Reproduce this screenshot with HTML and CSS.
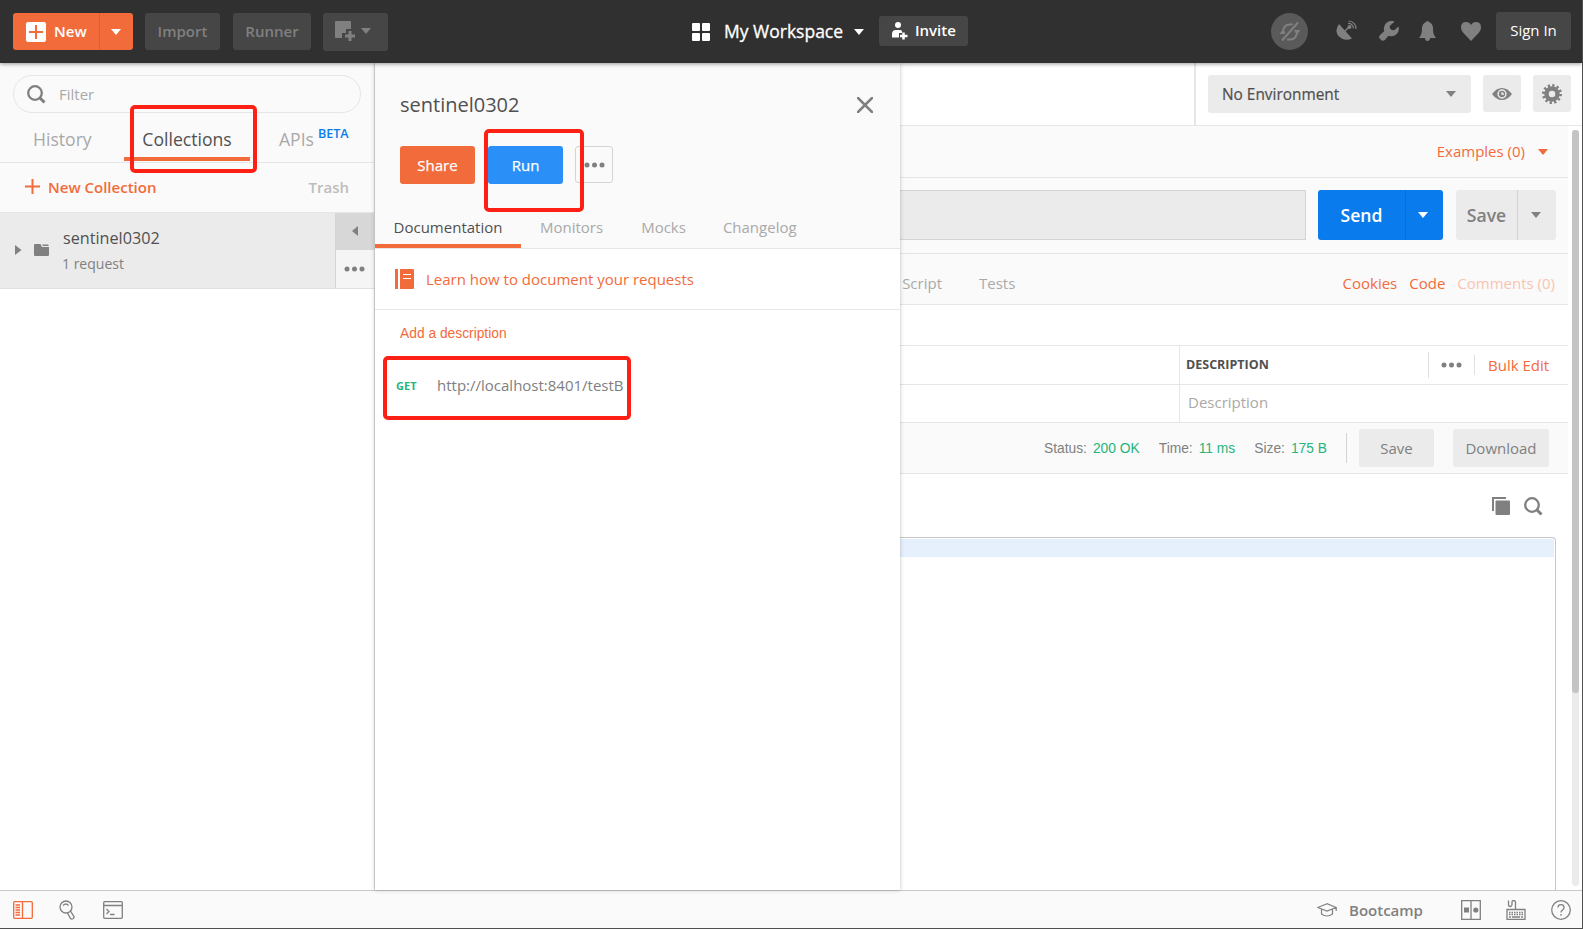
FILE: index.html
```html
<!DOCTYPE html>
<html lang="en">
<head>
  <meta charset="utf-8">
  <title>Postman</title>
  <link rel="stylesheet" href="styles.css">
</head>
<body>
  <div class="app">
    <header class="header">
      <div class="header-left">
        <div class="btn-new">
          <div class="new-main">
            <svg width="20" height="20" viewBox="0 0 20 20"><rect width="20" height="20" rx="2" fill="#fff"/><path d="M10 3v14M3 10h14" stroke="#f26b3a" stroke-width="2"/></svg>
            <span>New</span>
          </div>
          <div class="new-drop"><i class="caret white"></i></div>
        </div>
        <div class="btn-dark import">Import</div>
        <div class="btn-dark runner">Runner</div>
        <div class="btn-dark window">
          <svg width="20" height="20" viewBox="0 0 20 20"><path d="M0 1q0-1 1-1h14q1 0 1 1v7h-5v4H7v5H1q-1 0-1-1z" fill="#808080"/><path d="M15 10v10M10 15h10" stroke="#808080" stroke-width="3"/></svg>
          <i class="caret grey"></i>
        </div>
      </div>
      <div class="header-center">
        <svg width="18" height="18" viewBox="0 0 18 18" fill="#fff"><rect width="8" height="8" rx="1"/><rect x="10" width="8" height="8" rx="1"/><rect y="10" width="8" height="8" rx="1"/><rect x="10" y="10" width="8" height="8" rx="1"/></svg>
        <span class="workspace">My Workspace</span>
        <i class="caret white"></i>
        <div class="invite">
          <svg width="16" height="18" viewBox="0 0 16 18"><circle cx="6" cy="3" r="3" fill="#fff"/><path d="M0 15.500V12q0-4 4-4h4q1.500 0 2 1v2H7v4.500z" fill="#fff"/><path d="M11.500 10.500v7M8 14h7.500" stroke="#fff" stroke-width="2.500"/></svg>
          <span>Invite</span>
        </div>
      </div>
      <div class="header-right">
        <div class="sync">
          <svg width="22" height="22" viewBox="0 0 22 22" fill="none" stroke="#808080" stroke-width="2"><path d="M4 12q0-8.500 7-8.500h3M18 10q0 8.500-7 8.500H8"/><path d="M0.500 13h7L4 8.500zM14.500 9h7L18 13.500z" fill="#808080" stroke="none"/><path d="M19 1.500L3 19.500" stroke="#5a5a5a" stroke-width="5"/><path d="M19 1.500L3 19.500"/></svg>
        </div>
        <svg class="satellite" width="21" height="21" viewBox="0 0 21 21"><path d="M3 4Q-1.500 10 2 15.500 8 22 16 18.500z" fill="#808080"/><path d="M8 12l5-5" stroke="#808080" stroke-width="1.500"/><circle cx="13.500" cy="7" r="2" fill="#808080"/><path d="M12 3.500a5 5 0 0 1 5.500 5M12.500 1a7.500 7.500 0 0 1 7.500 8" fill="none" stroke="#808080" stroke-width="1.200"/></svg>
        <svg class="wrench" width="20" height="20" viewBox="0 0 20 20"><path d="M15.500 0.700A7.500 7.500 0 0 0 5.300 10L0.600 14.400q-1 1.500 0 3L2.800 19.500q1.500.8 3-.4L9.500 14.700A7.500 7.500 0 0 0 19.500 5.500L15.500 9q-3 .7-4.500-1.600-1-2.200 1-3.700z" fill="#808080"/></svg>
        <svg class="bell" width="17" height="20" viewBox="0 0 17 20"><path d="M7 1q1.500-2 3 0 4 1.500 4 7 0 6 3 9H0q3-3 3-9 0-5.500 4-7zM6 17h5q0 3-2.500 3T6 17z" fill="#808080"/></svg>
        <svg class="heart" width="20" height="19" viewBox="0 0 20 19"><path d="M10 19L2 10.500Q0 8 0 5.500 0 0 5 0 8.500 0 10 3 11.500 0 15 0 20 0 20 5.500 20 8 18 10.500z" fill="#808080"/></svg>
        <div class="sign-in">Sign In</div>
      </div>
    </header>

    <div class="main">
      <aside class="sidebar">
        <div class="filter">
          <svg width="19" height="19" viewBox="0 0 19 19" fill="none" stroke="#808080"><circle cx="8" cy="8" r="6.800" stroke-width="2.300"/><path d="M13 13l4.500 4.500" stroke-width="3"/></svg>
          <span>Filter</span>
        </div>
        <div class="side-tabs">
          <div class="side-tab history">History</div>
          <div class="side-tab active"><span>Collections</span></div>
          <div class="side-tab apis">APIs<span class="beta">BETA</span></div>
        </div>
        <div class="side-actions">
          <div class="new-collection">
            <svg width="15" height="15" viewBox="0 0 15 15"><path d="M7.500 0v15M0 7.500h15" stroke="#f26b3a" stroke-width="2"/></svg>
            <span>New Collection</span>
          </div>
          <div class="trash">Trash</div>
        </div>
        <div class="collection">
          <svg class="expand" width="7" height="10" viewBox="0 0 7 10"><path d="M0 0l6.500 5L0 10z" fill="#808080"/></svg>
          <svg class="folder" width="15" height="12" viewBox="0 0 15 12"><path d="M0 1q0-1 1-1h5.500L8 3h7v8q0 1-1 1H1q-1 0-1-1z" fill="#808080"/><path d="M8 .5h6.500V2H9z" fill="#808080"/></svg>
          <div class="collection-info">
            <div class="collection-name">sentinel0302</div>
            <div class="collection-count">1 request</div>
          </div>
          <div class="collection-side">
            <div class="collapse"><svg width="6" height="10" viewBox="0 0 6 10"><path d="M6 0L0 5l6 5z" fill="#808080"/></svg></div>
            <div class="more"><svg width="21" height="6" viewBox="0 0 21 6" fill="#808080"><circle cx="3" cy="3" r="2.500"/><circle cx="10.500" cy="3" r="2.500"/><circle cx="18" cy="3" r="2.500"/></svg></div>
          </div>
        </div>
      </aside>

      <section class="builder">
        <div class="env-bar">
          <div class="env">
            <div class="env-select"><span>No Environment</span><i class="caret grey"></i></div>
            <div class="env-btn"><svg width="20" height="12" viewBox="0 0 20 12"><path d="M0 6Q4.500 0 10 0t10 6q-4.500 6-10 6T0 6z" fill="#808080"/><circle cx="10" cy="6" r="3.900" fill="none" stroke="#ebebeb" stroke-width="1.500"/><path d="M10 4v2h2" fill="none" stroke="#ebebeb" stroke-width="1.300"/></svg></div>
            <div class="env-btn"><svg width="20" height="20" viewBox="0 0 20 20" fill="none" stroke="#808080"><circle cx="10" cy="10" r="5.500" stroke-width="4.500"/><circle cx="10" cy="10" r="8.600" stroke-width="2.800" stroke-dasharray="2.250 2.250"/></svg></div>
          </div>
        </div>
        <div class="request">
          <div class="examples"><span>Examples (0)</span> <i class="caret orange"></i></div>
          <div class="url-row">
            <div class="url-input"></div>
            <div class="send"><div class="send-text">Send</div><div class="drop"><i class="caret white"></i></div></div>
            <div class="save"><div class="save-text">Save</div><div class="drop"><i class="caret grey"></i></div></div>
          </div>
          <div class="req-tabs">
            <div class="req-tab script">Pre-request Script</div>
            <div class="req-tab">Tests</div>
            <div class="req-links">
              <span class="cookies">Cookies</span><span class="code">Code</span><span class="comments">Comments (0)</span>
            </div>
          </div>
          <div class="params-gap"></div>
          <div class="params-row">
            <div class="cell head">DESCRIPTION</div>
            <div class="params-tools">
              <div class="dots"><svg width="21" height="6" viewBox="0 0 21 6" fill="#808080"><circle cx="3" cy="3" r="2.500"/><circle cx="10.500" cy="3" r="2.500"/><circle cx="18" cy="3" r="2.500"/></svg></div>
              <div class="bulk">Bulk Edit</div>
            </div>
          </div>
          <div class="params-row second"><div class="cell placeholder">Description</div></div>
          <div class="status-row">
            <div class="stat status">Status: <b>200 OK</b></div>
            <div class="stat time">Time: <b>11 ms</b></div>
            <div class="stat size">Size: <b>175 B</b></div>
            <div class="res-btn res-save">Save</div>
            <div class="res-btn download">Download</div>
          </div>
          <div class="res-tools">
            <svg width="18" height="18" viewBox="0 0 18 18"><path d="M1 14V1h13" fill="none" stroke="#808080" stroke-width="2"/><rect x="3.500" y="3.500" width="14.500" height="14.500" rx="1" fill="#808080"/></svg>
            <svg width="19" height="19" viewBox="0 0 19 19" fill="none" stroke="#808080"><circle cx="8" cy="8" r="6.800" stroke-width="2.300"/><path d="M13 13l4.500 4.500" stroke-width="3"/></svg>
          </div>
          <div class="editor"><div class="editor-line"></div></div>
        </div>
        <div class="scrollbar"><div class="thumb"></div></div>
      </section>

      <!-- collection details drawer -->
      <section class="drawer">
        <div class="drawer-head">
          <div class="drawer-title">
            <span>sentinel0302</span>
            <svg width="16" height="16" viewBox="0 0 16 16"><path d="M1 1l14 14M15 1L1 15" stroke="#808080" stroke-width="2.500" stroke-linecap="round"/></svg>
          </div>
          <div class="drawer-buttons">
            <div class="btn share">Share</div>
            <div class="btn run">Run</div>
            <div class="btn-more"><svg width="21" height="6" viewBox="0 0 21 6" fill="#808080"><circle cx="3" cy="3" r="2.500"/><circle cx="10.500" cy="3" r="2.500"/><circle cx="18" cy="3" r="2.500"/></svg></div>
          </div>
          <div class="drawer-tabs">
            <div class="drawer-tab selected">Documentation</div>
            <div class="drawer-tab monitors">Monitors</div>
            <div class="drawer-tab mocks">Mocks</div>
            <div class="drawer-tab changelog">Changelog</div>
          </div>
        </div>
        <div class="learn">
          <svg width="19" height="20" viewBox="0 0 19 20"><path d="M0 0h3v20H0zM5 0h13q1 0 1 1v18q0 1-1 1H5z" fill="#f26b3a"/><path d="M8 5.500h8M8 9.500h8" stroke="#fff"/></svg>
          <span>Learn how to document your requests</span>
        </div>
        <div class="add-desc">Add a description</div>
        <div class="request-item"><span class="method">GET</span><span class="url">http://localhost:8401/testB</span></div>
      </section>
    </div>

    <footer class="footer">
      <div class="footer-left">
        <svg width="20" height="18" viewBox="0 0 20 18" fill="none" stroke="#f26b3a" stroke-width="1.300"><rect x=".7" y=".7" width="18.600" height="16.600" rx="1"/><path d="M9.500 1v16M2.500 4H7M2.500 6.500H7M2.500 9H7M2.500 11.500H7M2.500 14H7"/></svg>
        <svg class="find" width="16" height="20" viewBox="0 0 16 20" fill="none" stroke="#808080" stroke-width="1.300"><circle cx="7" cy="7" r="6"/><path d="M4 5.500q3-3 5.500 0M8.500 13l3 5.500q1 1 2.500.2 1.500-1 .8-2.400L11.500 11"/></svg>
        <svg width="20" height="18" viewBox="0 0 20 18" fill="none" stroke="#808080" stroke-width="1.300"><rect x=".7" y=".7" width="18.600" height="16.600" rx="1"/><path d="M1 4.500h18M3.500 8l2.500 2.500L3.500 13M7 13.500h4.500"/></svg>
      </div>
      <div class="footer-right">
        <svg width="20" height="14" viewBox="0 0 20 14" fill="none" stroke="#808080" stroke-width="1.200"><path d="M10 .7L.8 4.500 10 8l9.200-3.500zM4.500 6v5q5.500 4 11 0V6M19.200 4.500V8"/></svg>
        <span class="bootcamp">Bootcamp</span>
        <svg width="20" height="20" viewBox="0 0 20 20"><path d="M.7.700h18.600v18.600H.7zM10 1v18" fill="none" stroke="#808080" stroke-width="1.300"/><rect x="3" y="7.500" width="5" height="5" fill="#808080"/><circle cx="14.800" cy="10" r="2.600" fill="#808080"/></svg>
        <svg class="keyboard" width="20" height="20" viewBox="0 0 20 20" fill="none" stroke="#808080" stroke-width="1.300"><path d="M1 9.500h18v10H1zM2.500 0.500v4q0 2 1.700 2T6 4.500V2.500q0-2 1.700-2T9.500 2.500v7"/><path d="M3 12.500h14M3 14.500h14" stroke-dasharray="1.500 1"/><path d="M3 17h2M6 17h8M15 17h2"/></svg>
        <svg class="help" width="20" height="20" viewBox="0 0 20 20" fill="none" stroke="#808080" stroke-width="1.300"><circle cx="10" cy="10" r="9.300"/><path d="M7 7.500Q7 4.700 10 4.700t3 2.800q0 1.500-1.500 2.500T10 12.500M10 14v1.800"/></svg>
      </div>
    </footer>

    <div class="mark mark-collections"></div>
    <div class="mark mark-run"></div>
    <div class="mark mark-request"></div>
  </div>
</body>
</html>
```

FILE: styles.css
```css
* {
  box-sizing: border-box;
}

body {
  margin: 0;
  font-family: "Open Sans", "Noto Sans", sans-serif;
  font-size: 15px;
  color: #505050;
}

svg {
  display: block;
  flex: none;
}

.app {
  position: relative;
  display: flex;
  flex-direction: column;
  width: 1583px;
  height: 929px;
  border-right: 1px solid #505050;
  border-bottom: 1px solid #505050;
  background: #fff;
  overflow: hidden;
  white-space: nowrap;
}

.caret {
  flex: none;
  border: 5px solid transparent;
  border-top: 6px solid;
  border-bottom: 0;
}

.white { border-top-color: #fff; }
.grey { border-top-color: #808080; }
.orange { border-top-color: #f26b3a; }

/* Header */
.header {
  position: relative;
  z-index: 3;
  display: flex;
  height: 63px;
  flex: none;
  background: #303030;
  box-shadow: 0 1px 4px rgba(0, 0, 0, 0.4);
}

.header-left {
  display: flex;
  align-items: center;
  width: 692px;
  padding-left: 13px;
}

.btn-new {
  display: flex;
  width: 120px;
  height: 37px;
  border-radius: 3px;
  background: #f26b3a;
  color: #fff;
  font-weight: 600;
}

.new-main {
  display: flex;
  align-items: center;
  gap: 8px;
  width: 87px;
  padding-left: 13px;
  border-right: 1px solid #db5f31;
}

.new-main span,
.invite span {
  padding-bottom: 2px;
}

.new-drop {
  display: flex;
  flex: 1;
  align-items: center;
  justify-content: center;
  padding-right: 2px;
}

.btn-dark {
  display: flex;
  align-items: center;
  justify-content: center;
  height: 37px;
  padding-bottom: 2px;
  border-radius: 3px;
  background: #464646;
  color: #808080;
  font-weight: 600;
}

.import { width: 75px; margin-left: 12px; }
.runner { width: 78px; margin-left: 13px; }
.window {
  width: 65px;
  height: 38px;
  margin-left: 12px;
  padding: 0 5px 2px 0;
  gap: 6px;
}

.header-center {
  display: flex;
  align-items: center;
  color: #fff;
}

.workspace {
  width: 130px;
  margin-left: 14px;
  padding-bottom: 2px;
  font-size: 17.5px;
  -webkit-text-stroke: 0.3px #fff;
}

.invite {
  display: flex;
  align-items: center;
  gap: 7px;
  width: 89px;
  height: 30px;
  margin: 0 0 1px 15px;
  padding-left: 13px;
  border-radius: 3px;
  background: #464646;
  font-weight: 600;
}

.header-right {
  display: flex;
  align-items: center;
  margin-left: auto;
  padding-right: 11px;
}

.sync {
  display: flex;
  align-items: center;
  justify-content: center;
  width: 37px;
  height: 37px;
  border-radius: 50%;
  background: #5a5a5a;
}

.satellite { margin: 0 0 2px 28px; }
.wrench { margin: 0 0 2px 22px; }
.bell { margin: 0 0 2px 20px; }
.heart { margin-left: 25px; }

.sign-in {
  width: 75px;
  height: 38px;
  margin: 0 0 1px 15px;
  border-radius: 3px;
  background: #464646;
  color: #fff;
  line-height: 37px;
  text-align: center;
}

/* Sidebar */
.main {
  position: relative;
  display: flex;
  flex: 1;
  min-height: 0;
}

.sidebar {
  width: 376px;
  flex: none;
  padding-top: 12px;
  border-right: 2px solid #dcdcdc;
  background: linear-gradient(#fafafa 149px, #fff 149px);
}

.filter {
  display: flex;
  align-items: center;
  gap: 13px;
  width: 348px;
  height: 38px;
  margin-left: 13px;
  padding-left: 13px;
  border: 1px solid #e6e6e6;
  border-radius: 19px;
  color: #a9a9a9;
}

.side-tabs {
  display: flex;
  height: 50px;
  border-bottom: 1px solid #e6e6e6;
  font-size: 17.6px;
  line-height: 52px;
  color: #a9a9a9;
}

.history { width: 124px; padding-left: 33px; }

.active {
  width: 126px;
  height: 48px;
  border-bottom: 4px solid #f26b3a;
  color: #505050;
  text-align: center;
}

.apis {
  display: flex;
  padding-left: 29px;
}

.beta {
  margin-left: 4px;
  font-size: 12.5px;
  font-weight: 600;
  line-height: 41px;
  color: #097bed;
}

.side-actions {
  display: flex;
  align-items: center;
  justify-content: space-between;
  height: 49px;
  padding: 0 25px 0 25px;
  font-weight: 600;
  color: #bdbdbd;
}

.side-actions span,
.trash {
  padding-bottom: 2px;
}

.new-collection {
  display: flex;
  align-items: center;
  gap: 8px;
  color: #f26b3a;
}

.new-collection svg {
  margin-bottom: 2px;
}

.collection {
  display: flex;
  align-items: center;
  height: 77px;
  padding-left: 15px;
  border-top: 1px solid #e6e6e6;
  border-bottom: 1px solid #e0e0e0;
  background: #ebebeb;
}

.folder { margin-left: 12px; }

.expand,
.folder {
  margin-bottom: 1px;
}

.collection-info {
  flex: 1;
  margin-left: 13px;
}

.collection-name {
  padding-left: 1px;
  font-size: 16.2px;
  line-height: 26px;
}

.collection-count {
  font-size: 14px;
  line-height: 26px;
  color: #808080;
}

.collection-side {
  width: 39px;
  height: 75px;
  border-left: 1px solid #d4d4d4;
}

.collapse,
.more {
  display: flex;
  align-items: center;
  justify-content: center;
  height: 37px;
  padding-right: 1px;
  background: #d7d7d7;
}

.collapse svg {
  margin-bottom: 2px;
}

.more {
  height: 38px;
  background: #f5f5f5;
}

/* Request builder */
.builder {
  position: relative;
  display: flex;
  flex: 1;
  flex-direction: column;
  min-width: 0;
}

.env-bar {
  display: flex;
  justify-content: flex-end;
  height: 63px;
  flex: none;
  border-bottom: 1px solid #e6e6e6;
}

.env {
  display: flex;
  gap: 12px;
  width: 388px;
  padding: 12px 0 0 12px;
  border-left: 2px solid #e6e6e6;
}

.env-select {
  display: flex;
  align-items: center;
  justify-content: space-between;
  width: 263px;
  height: 38px;
  padding: 0 15px 0 14px;
  border-radius: 3px;
  background: #ebebeb;
  font-size: 15.4px;
  -webkit-text-stroke: 0.2px #505050;
}

.env-btn {
  display: flex;
  align-items: center;
  justify-content: center;
  width: 38px;
  height: 37px;
  border-radius: 3px;
  background: #ebebeb;
}

.request {
  display: flex;
  flex: 1;
  flex-direction: column;
  width: 1192px;
}

.examples {
  display: flex;
  align-items: center;
  justify-content: flex-end;
  gap: 13px;
  height: 52px;
  padding-right: 20px;
  border-bottom: 1px solid #e6e6e6;
  background: #fafafa;
  color: #f26b3a;
}

.examples span {
  padding-bottom: 2px;
}

.url-row {
  display: flex;
  height: 76px;
  padding: 12px 12px 0 0;
  border-bottom: 1px solid #e6e6e6;
  background: #fafafa;
}

.url-input {
  flex: 1;
  height: 50px;
  border: 1px solid #d4d4d4;
  background: #ebebeb;
}

.send,
.save {
  display: flex;
  height: 50px;
  border-radius: 3px;
  font-size: 17.6px;
  font-weight: 600;
  line-height: 50px;
  text-align: center;
}

.send {
  width: 125px;
  margin-left: 12px;
  background: #097bed;
  color: #fff;
}

.send-text { width: 87px; }

.save {
  width: 100px;
  margin-left: 13px;
  background: #ebebeb;
  color: #808080;
}

.save-text { width: 61px; }

.drop {
  display: flex;
  flex: 1;
  align-items: center;
  justify-content: center;
  padding-right: 3px;
  border-left: 1px solid #0a6ed1;
}

.save .drop { border-left-color: #d4d4d4; }

.req-tabs {
  display: flex;
  height: 51px;
  border-bottom: 1px solid #e6e6e6;
  background: #fafafa;
  color: #a9a9a9;
  line-height: 58px;
}

.script {
  width: 566px;
  text-align: right;
}

.req-tab + .req-tab { margin-left: 37px; }

.req-links {
  display: flex;
  gap: 12px;
  margin-left: auto;
  padding-right: 13px;
  color: #f26b3a;
}

.comments { color: #f9c4b0; }

.params-gap {
  height: 41px;
  border-bottom: 1px solid #e6e6e6;
}

.params-row {
  display: flex;
  height: 39px;
  padding-left: 803px;
  border-bottom: 1px solid #e6e6e6;
}

.second { height: 38px; }

.cell {
  flex: 1;
  padding-left: 6px;
  border-left: 1px solid #e6e6e6;
  line-height: 37px;
}

.head {
  font-size: 12.5px;
  font-weight: 700;
}

.placeholder {
  padding-left: 8px;
  line-height: 35px;
  color: #a9a9a9;
}

.params-tools {
  display: flex;
  align-items: center;
  width: 140px;
}

.dots {
  display: flex;
  align-items: center;
  justify-content: center;
  width: 46px;
  height: 26px;
  border-left: 1px solid #e0e0e0;
}

.bulk {
  height: 20px;
  padding-left: 13px;
  border-left: 1px solid #e0e0e0;
  color: #f26b3a;
  line-height: 20px;
}

.status-row {
  display: flex;
  align-items: center;
  height: 51px;
  padding-right: 19px;
  justify-content: flex-end;
  border-bottom: 1px solid #e6e6e6;
  background: #fafafa;
}

.stat {
  display: flex;
  align-items: center;
  gap: 6px;
  height: 30px;
  margin-right: 19px;
  padding-top: 1px;
  font-family: "Liberation Sans", sans-serif;
  font-size: 13.8px;
  color: #808080;
}

.stat b {
  font-weight: 400;
  color: #26b47f;
}

.size {
  margin-right: 12px;
  padding-right: 19px;
  border-right: 1px solid #d4d4d4;
}

.res-btn {
  width: 75px;
  height: 38px;
  border-radius: 3px;
  background: #ebebeb;
  color: #808080;
  line-height: 38px;
  text-align: center;
}

.download {
  width: 96px;
  margin-left: 19px;
}

.res-tools {
  display: flex;
  justify-content: flex-end;
  gap: 14px;
  height: 63px;
  padding: 23px 25px 0 0;
}

.editor {
  flex: 1;
  margin-right: 12px;
  padding: 1px 1px 0 0;
  border: 1px solid #c8c8c8;
  border-bottom: 0;
  border-radius: 0 4px 0 0;
}

.editor-line {
  height: 18px;
  background: #e6f0fd;
}

.scrollbar {
  position: absolute;
  top: 67px;
  right: 3px;
  width: 7px;
  height: 756px;
  border-radius: 4px;
  background: #ebebeb;
}

.thumb {
  height: 563px;
  border-radius: 3px;
  background: #c4c4c4;
}

/* Drawer over the builder */
.drawer {
  position: absolute;
  top: 0;
  left: 375px;
  z-index: 2;
  width: 525px;
  height: 827px;
  background: #fff;
  box-shadow: 0 0 4px rgba(0, 0, 0, 0.25);
}

.drawer-head {
  height: 186px;
  padding-top: 27px;
  border-bottom: 1px solid #e6e6e6;
  background: #fafafa;
}

.drawer-title {
  display: flex;
  align-items: center;
  justify-content: space-between;
  height: 30px;
  padding: 0 27px 0 25px;
  font-size: 20px;
}

.drawer-title span {
  padding-bottom: 2px;
}

.drawer-buttons {
  display: flex;
  margin: 26px 0 0 25px;
}

.btn {
  width: 75px;
  height: 38px;
  margin-right: 13px;
  border-radius: 3px;
  color: #fff;
  line-height: 38px;
  text-align: center;
  -webkit-text-stroke: 0.25px #fff;
}

.share { background: #f26b3a; }
.run { margin-right: 12px; background: #2a90f8; }

.btn-more {
  display: flex;
  align-items: center;
  justify-content: center;
  width: 38px;
  height: 37px;
  border: 1px solid #d4d4d4;
  border-radius: 3px;
}

.drawer-tabs {
  display: flex;
  height: 64px;
  color: #a9a9a9;
  line-height: 87px;
}

.selected {
  width: 146px;
  border-bottom: 4px solid #f26b3a;
  color: #505050;
  text-align: center;
}

.monitors { margin-left: 19px; }
.mocks { margin-left: 38px; }
.changelog { margin-left: 37px; }

.learn {
  display: flex;
  align-items: center;
  gap: 12px;
  height: 61px;
  padding-left: 20px;
  border-bottom: 1px solid #e6e6e6;
  color: #f26b3a;
}

.add-desc {
  padding-left: 25px;
  font-family: "Liberation Sans", sans-serif;
  font-size: 13.8px;
  line-height: 47px;
  color: #f26b3a;
}

.request-item {
  display: flex;
  padding-left: 21px;
  line-height: 58px;
}

.method {
  width: 41px;
  font-size: 11px;
  font-weight: 700;
  color: #26b47f;
}

.url {
  line-height: 56px;
  color: #808080;
}

/* Footer */
.footer {
  display: flex;
  align-items: center;
  justify-content: space-between;
  height: 38px;
  flex: none;
  padding: 0 11px 0 13px;
  border-top: 1px solid #c8c8c8;
  background: #fafafa;
}

.footer-left {
  display: flex;
  align-items: center;
}

.find { margin: 0 28px 0 26px; }

.footer-right {
  display: flex;
  align-items: center;
  color: #808080;
}

.bootcamp {
  width: 112px;
  margin-left: 12px;
  font-weight: 600;
}

.keyboard { margin-left: 25px; }
.help { margin-left: 25px; }

/* Red highlight boxes */
.mark {
  position: absolute;
  z-index: 4;
  border: 4px solid #ff2015;
  border-radius: 5px;
}

.mark-collections {
  top: 105px;
  left: 130px;
  width: 127px;
  height: 68px;
}

.mark-run {
  top: 129px;
  left: 484px;
  width: 100px;
  height: 83px;
}

.mark-request {
  top: 356px;
  left: 383px;
  width: 248px;
  height: 64px;
}
```
